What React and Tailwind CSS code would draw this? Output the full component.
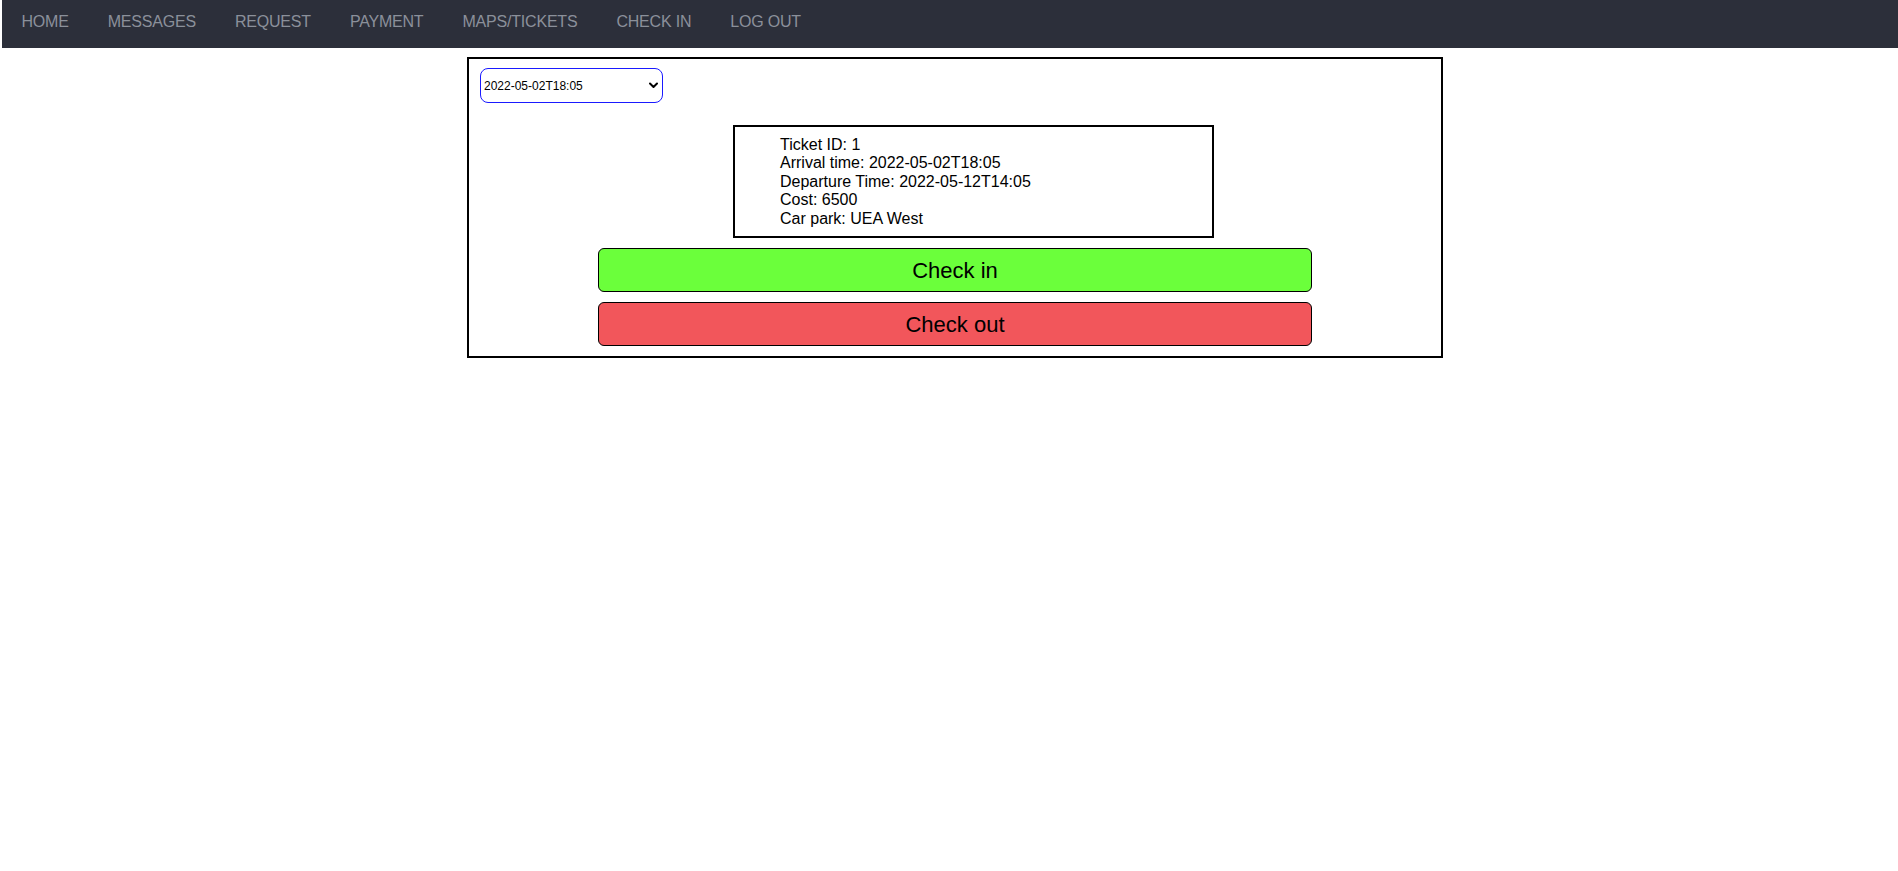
import React from "react";

export default function App() {
  const nav = ["HOME", "MESSAGES", "REQUEST", "PAYMENT", "MAPS/TICKETS", "CHECK IN", "LOG OUT"];
  return (
    <div className="min-h-[871px] bg-white" style={{ fontFamily: '"Liberation Sans", Arial, sans-serif' }}>
      <nav className="ml-[2px] h-[48px] bg-[#2c2f3a] flex items-start pt-[13px]">
        {nav.map((n) => (
          <a key={n} className="px-[19.5px] text-[16px] leading-[18px] text-[#8b909a] font-light tracking-[-0.2px]">
            {n}
          </a>
        ))}
      </nav>
      <div className="ml-[467px] mt-[9px] w-[976px] h-[301px] border-2 border-black pl-[11px] pt-[9px]">
        <div className="relative w-[183px] h-[35px]">
          <select
            defaultValue="a"
            className="appearance-none w-full h-full border border-[#1a1aff] rounded-[8px] pl-[3px] text-[12px] text-black bg-white outline-none"
          >
            <option value="a">2022-05-02T18:05</option>
          </select>
          <svg className="absolute right-[5px] top-[14px] pointer-events-none" width="9" height="7" viewBox="0 0 9 7">
            <path d="M1 1.5 L4.5 5 L8 1.5" fill="none" stroke="black" strokeWidth="2" strokeLinecap="round" strokeLinejoin="round" />
          </svg>
        </div>
        <div className="ml-[253px] mt-[22px] w-[481px] h-[113px] border-2 border-black pl-[45px] pt-[9px] text-[16px] leading-[18.4px] text-black">
          <div>Ticket ID: 1</div>
          <div>Arrival time: 2022-05-02T18:05</div>
          <div>Departure Time: 2022-05-12T14:05</div>
          <div>Cost: 6500</div>
          <div>Car park: UEA West</div>
        </div>
        <button className="block ml-[118px] mt-[10px] w-[714px] h-[44px] border border-black rounded-[6px] bg-[#6bff3b] text-[22px] text-black">
          Check in
        </button>
        <button className="block ml-[118px] mt-[10px] w-[714px] h-[44px] border border-black rounded-[6px] bg-[#f2565b] text-[22px] text-black">
          Check out
        </button>
      </div>
    </div>
  );
}
